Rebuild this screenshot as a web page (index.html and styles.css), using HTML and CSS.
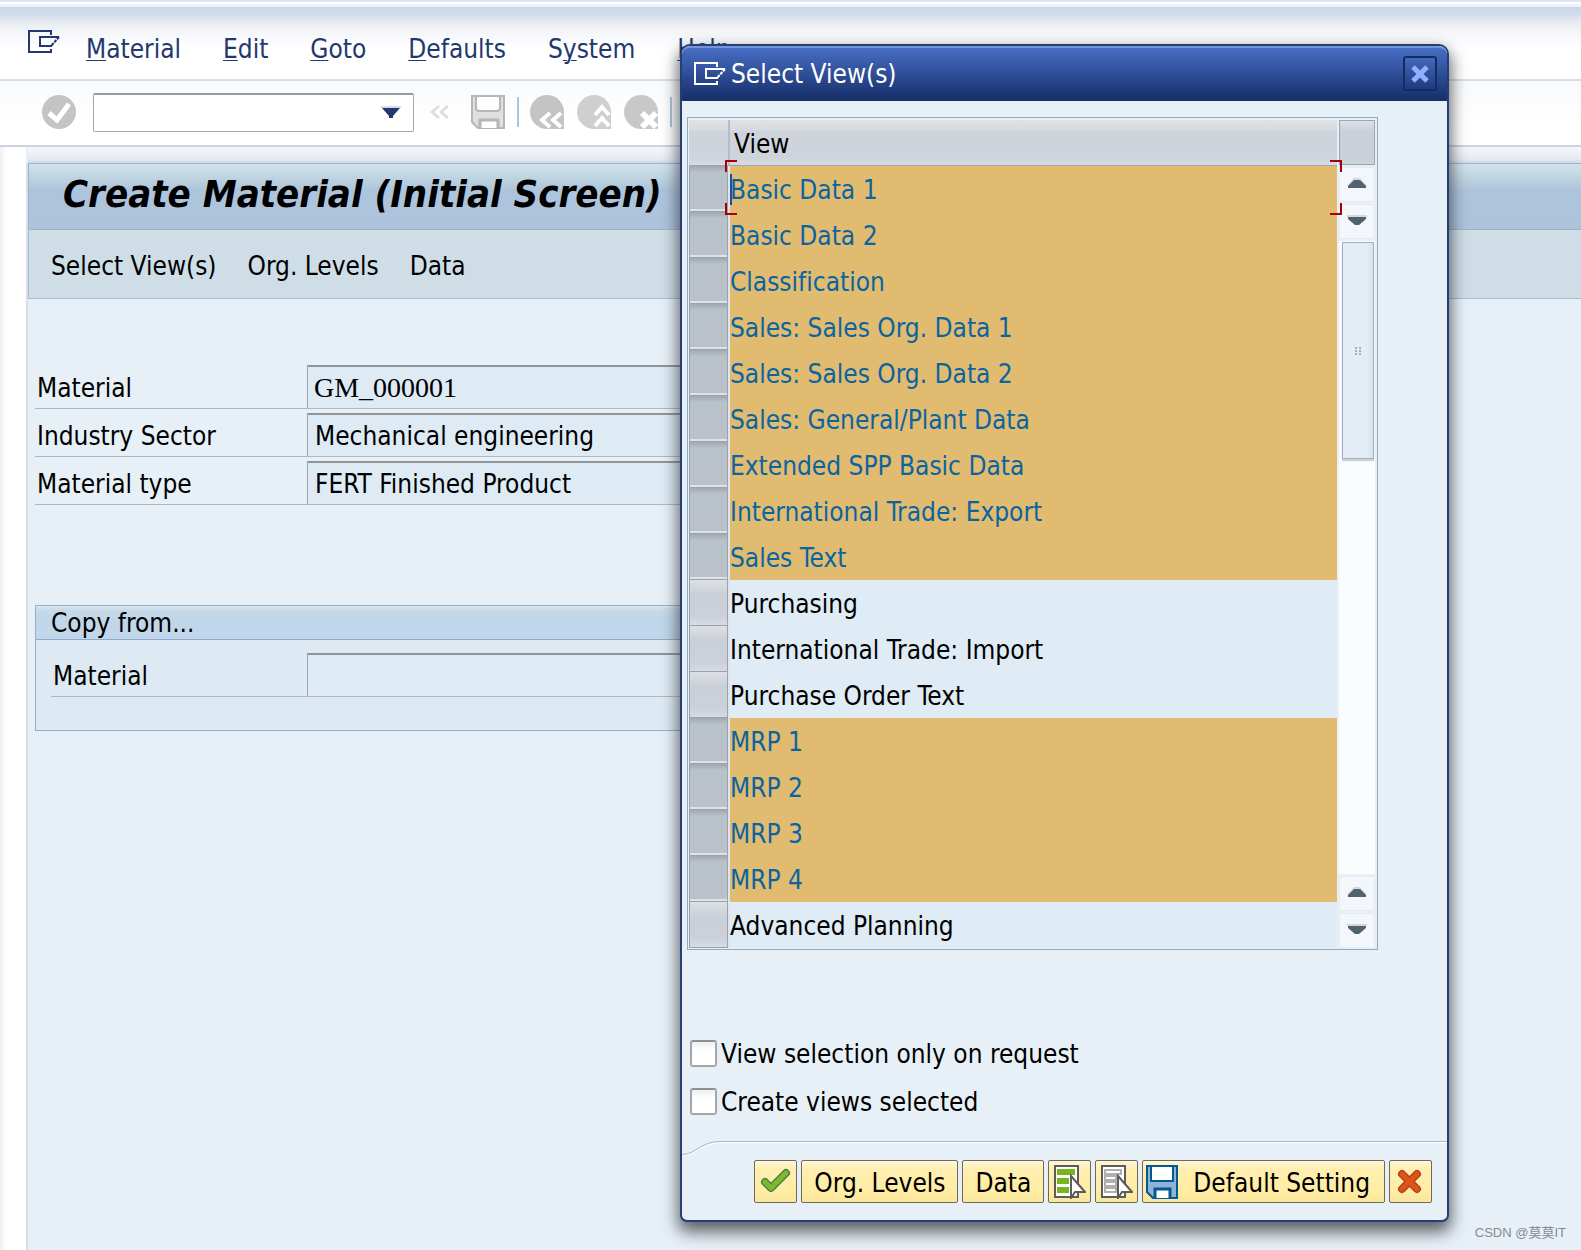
FILE: index.html
```html
<!DOCTYPE html>
<html lang="en">
<head>
<meta charset="utf-8">
<title>Create Material (Initial Screen)</title>
<link rel="stylesheet" href="styles.css">
</head>
<body>
<div class="window">
  <header class="menubar">
    <button class="menu-icon" aria-label="System menu">
      <svg width="33" height="24" viewBox="0 0 33 24" fill="none" stroke="currentColor" stroke-width="2"><path d="M23 5V1H1V22H23V19"/><path d="M12 7H31M12 6V17M12 16H24"/><path d="M31 7L23 16" stroke-dasharray="3 1"/></svg>
    </button>
    <nav class="menus">
      <a href="#"><u>M</u>aterial</a>
      <a href="#"><u>E</u>dit</a>
      <a href="#"><u>G</u>oto</a>
      <a href="#"><u>D</u>efaults</a>
      <a href="#">S<u>y</u>stem</a>
      <a href="#"><u>H</u>elp</a>
    </nav>
  </header>

  <div class="toolbar">
    <button class="tool" aria-label="Enter">
      <svg width="34" height="34" viewBox="0 0 34 34"><circle cx="17" cy="17" r="17" fill="#c4c4c4"/><path d="M7 18L15 25L27 9" fill="none" stroke="#fff" stroke-width="5"/></svg>
    </button>
    <div class="command">
      <input type="text" aria-label="Command">
      <button aria-label="Command history">
        <svg width="20" height="13" viewBox="0 0 20 13"><path d="M0 0H20V2H0Z" fill="#d8dbe4"/><path d="M1 2H19L12 10V12H8V10Z" fill="#22386f"/></svg>
      </button>
    </div>
    <button class="tool collapse" aria-label="Collapse">
      <svg width="20" height="14" viewBox="0 0 20 14" fill="none" stroke="#dcdcdc" stroke-width="2.500"><path d="M9 1L2 7L9 13M18 1L11 7L18 13"/></svg>
    </button>
    <button class="tool" aria-label="Save">
      <svg width="34" height="34" viewBox="0 0 34 34"><path d="M1 1H33V33H7L1 27Z" fill="#e0e0e0" stroke="#b6b6b6" stroke-width="2"/><path d="M5 1H29V13Q29 16 26 16H8Q5 16 5 13Z" fill="#fff" stroke="#b6b6b6" stroke-width="2"/><path d="M9 33V25H27V33" fill="#fff" stroke="#b6b6b6" stroke-width="3"/></svg>
    </button>
    <span class="divider"></span>
    <div class="nav-tools">
      <button class="tool" aria-label="Back">
        <svg width="34" height="34" viewBox="0 0 34 34"><circle cx="17" cy="17" r="17" fill="#c4c4c4"/><path d="M34 20V34H18Z" fill="#c4c4c4"/><path d="M20 18L12 25L20 32M31 18L23 25L31 32" fill="none" stroke="#fff" stroke-width="4"/></svg>
      </button>
      <button class="tool" aria-label="Exit">
        <svg width="34" height="34" viewBox="0 0 34 34"><circle cx="17" cy="17" r="17" fill="#cfcfcf"/><path d="M34 18V34H18Z" fill="#cfcfcf"/><path d="M18 20L25 12L32 20M18 31L25 23L32 31" fill="none" stroke="#fff" stroke-width="4"/></svg>
      </button>
      <button class="tool" aria-label="Cancel">
        <svg width="34" height="34" viewBox="0 0 34 34"><circle cx="17" cy="17" r="17" fill="#c8c8c8"/><path d="M34 18V34H18Z" fill="#c8c8c8"/><path d="M18 18L32 32M32 18L18 32" fill="none" stroke="#fff" stroke-width="6"/></svg>
      </button>
    </div>
    <span class="divider"></span>
  </div>

  <main class="workspace">
    <div class="page">
      <h1 class="page-title">Create Material (Initial Screen)</h1>
      <div class="page-actions">
        <button>Select View(s)</button>
        <button>Org. Levels</button>
        <button>Data</button>
      </div>
      <form class="form">
        <div class="field">
          <label for="material">Material</label>
          <input id="material" class="typed" type="text" value="GM_000001">
        </div>
        <div class="field">
          <label for="sector">Industry Sector</label>
          <input id="sector" type="text" value="Mechanical engineering">
        </div>
        <div class="field">
          <label for="type">Material type</label>
          <input id="type" type="text" value="FERT Finished Product">
        </div>
        <section class="group">
          <h2>Copy from...</h2>
          <div class="field">
            <label for="copy-material">Material</label>
            <input id="copy-material" type="text">
          </div>
        </section>
      </form>
    </div>
  </main>
</div>

<div class="dialog" role="dialog" aria-labelledby="dialog-title">
  <div class="dialog-head">
    <svg width="33" height="24" viewBox="0 0 33 24" fill="none" stroke="#fff" stroke-width="2"><path d="M23 5V1H1V22H23V19"/><path d="M12 7H31M12 6V17M12 16H24"/><path d="M31 7L23 16" stroke-dasharray="3 1"/></svg>
    <h2 id="dialog-title">Select View(s)</h2>
    <button class="close" aria-label="Close">
      <svg width="18" height="18" viewBox="0 0 18 18"><path d="M2 2L16 16M16 2L2 16" stroke="#8eb0ff" stroke-width="5"/></svg>
    </button>
  </div>

  <div class="grid">
    <table>
      <thead><tr><th class="pick" aria-label="Select"></th><th class="name">View</th></tr></thead>
      <tbody>
        <tr class="on current"><td class="pick"><button aria-label="Row 1"></button></td><td><i class="mark tl"></i><i class="mark tr"></i><i class="mark bl"></i><i class="mark br"></i><i class="caret"></i>Basic Data 1</td></tr>
        <tr class="on"><td class="pick"><button aria-label="Row 2"></button></td><td>Basic Data 2</td></tr>
        <tr class="on"><td class="pick"><button aria-label="Row 3"></button></td><td>Classification</td></tr>
        <tr class="on"><td class="pick"><button aria-label="Row 4"></button></td><td>Sales: Sales Org. Data 1</td></tr>
        <tr class="on"><td class="pick"><button aria-label="Row 5"></button></td><td>Sales: Sales Org. Data 2</td></tr>
        <tr class="on"><td class="pick"><button aria-label="Row 6"></button></td><td>Sales: General/Plant Data</td></tr>
        <tr class="on"><td class="pick"><button aria-label="Row 7"></button></td><td>Extended SPP Basic Data</td></tr>
        <tr class="on"><td class="pick"><button aria-label="Row 8"></button></td><td>International Trade: Export</td></tr>
        <tr class="on"><td class="pick"><button aria-label="Row 9"></button></td><td>Sales Text</td></tr>
        <tr><td class="pick"><button aria-label="Row 10"></button></td><td>Purchasing</td></tr>
        <tr><td class="pick"><button aria-label="Row 11"></button></td><td>International Trade: Import</td></tr>
        <tr><td class="pick"><button aria-label="Row 12"></button></td><td>Purchase Order Text</td></tr>
        <tr class="on"><td class="pick"><button aria-label="Row 13"></button></td><td>MRP 1</td></tr>
        <tr class="on"><td class="pick"><button aria-label="Row 14"></button></td><td>MRP 2</td></tr>
        <tr class="on"><td class="pick"><button aria-label="Row 15"></button></td><td>MRP 3</td></tr>
        <tr class="on"><td class="pick"><button aria-label="Row 16"></button></td><td>MRP 4</td></tr>
        <tr><td class="pick"><button aria-label="Row 17"></button></td><td>Advanced Planning</td></tr>
      </tbody>
    </table>
    <div class="side">
      <button class="corner" aria-label="Configure columns"></button>
      <button class="step" aria-label="First"><svg width="20" height="10" viewBox="0 0 20 10"><path d="M0 8L7 0H13L20 8Z" fill="#d3d8dd"/><path d="M1 10V8L7 2H13L19 8V10Z" fill="#51626f"/></svg></button>
      <button class="step" aria-label="Previous"><svg width="20" height="10" viewBox="0 0 20 10"><path d="M0 0H20V2H0Z" fill="#d3d8dd"/><path d="M1 2H19V4L12 10H8L1 4Z" fill="#51626f"/></svg></button>
      <div class="track"><div class="thumb"><svg width="6" height="8" viewBox="0 0 6 8" fill="#9fb0c0"><path d="M0 0H2V2H0ZM4 0H6V2H4ZM0 3H2V5H0ZM4 3H6V5H4ZM0 6H2V8H0ZM4 6H6V8H4Z"/></svg></div></div>
      <button class="step" aria-label="Next"><svg width="20" height="10" viewBox="0 0 20 10"><path d="M0 8L7 0H13L20 8Z" fill="#d3d8dd"/><path d="M1 10V8L7 2H13L19 8V10Z" fill="#51626f"/></svg></button>
      <button class="step" aria-label="Last"><svg width="20" height="10" viewBox="0 0 20 10"><path d="M0 0H20V2H0Z" fill="#d3d8dd"/><path d="M1 2H19V4L12 10H8L1 4Z" fill="#51626f"/></svg></button>
    </div>
  </div>

  <div class="options">
    <label><input type="checkbox"><span>View selection only on request</span></label>
    <label><input type="checkbox"><span>Create views selected</span></label>
  </div>

  <footer class="dialog-foot">
    <div class="edge">
      <svg width="38" height="16" viewBox="0 0 38 16" fill="none"><path d="M0 14.500C14 14.500 20 2.500 38 1.500" stroke="#fff"/><path d="M0 13.500C14 13.500 18 .5 38 .5" stroke="#a9b6cc"/></svg>
      <span></span>
    </div>
    <div class="buttons">
      <button class="square" aria-label="Continue">
        <svg width="34" height="30" viewBox="0 0 34 30" fill="none" stroke-linejoin="round" stroke-linecap="round"><path d="M6 15L12 21L27 6" stroke="#4b8050" stroke-width="8"/><path d="M6 15L12 21L27 6" stroke="#7db928" stroke-width="5"/></svg>
      </button>
      <button class="wide">Org. Levels</button>
      <button class="wide">Data</button>
      <button class="square" aria-label="Select all">
        <svg width="33" height="35" viewBox="0 0 33 35"><path d="M2 2H25V33H2Z" fill="#fff" stroke="#5c5c5c" stroke-width="2"/><path d="M4 5H22V11H4ZM4 14H16V20H4ZM4 23H16V29H4Z" fill="#78b51c"/><path d="M18 12V34L22 28H32Z" fill="#fff" stroke="#5c5c5c" stroke-width="2"/></svg>
      </button>
      <button class="square" aria-label="Deselect all">
        <svg width="33" height="35" viewBox="0 0 33 35"><path d="M2 2H25V33H2Z" fill="#fff" stroke="#5c5c5c" stroke-width="2"/><path d="M5 6H21V10H5ZM5 12H16V16H5ZM5 18H16V22H5ZM5 24H16V28H5Z" fill="#fff" stroke="#b0b0b0" stroke-width="2"/><path d="M18 12V34L22 28H32Z" fill="#fff" stroke="#5c5c5c" stroke-width="2"/></svg>
      </button>
      <button class="save">
        <svg width="32" height="34" viewBox="0 0 32 34"><path d="M1 1H31V33H7L1 27Z" fill="#8fb2d9" stroke="#045a90" stroke-width="2"/><path d="M5 1H27V16H5Z" fill="#fff" stroke="#045a90" stroke-width="2"/><path d="M9 33V24H24V33" fill="#fff" stroke="#045a90" stroke-width="3"/></svg>
        <span>Default Setting</span>
      </button>
      <button class="square" aria-label="Cancel">
        <svg width="30" height="28" viewBox="0 0 30 28" stroke-linecap="round"><path d="M6 6L21 21M21 6L6 21" stroke="#b3402a" stroke-width="8"/><path d="M6 6L21 21M21 6L6 21" stroke="#de5613" stroke-width="5"/></svg>
      </button>
    </div>
  </footer>
</div>

<p class="credit">CSDN @莫莫IT</p>
</body>
</html>
```
FILE: styles.css
```css
* { box-sizing: border-box; }

body {
  margin: 0;
  position: relative;
  min-height: 100vh;
  overflow-x: hidden;
  background: #e8f0f7;
  color: #000;
  font: 26px/32px "DejaVu Sans Condensed", "Noto Sans", sans-serif;
  font-variant-ligatures: none;
}

h1, h2, p { margin: 0; }

h1, h2 {
  font-size: 26px;
  font-weight: normal;
}

button, input {
  margin: 0;
  padding: 0;
  border: 0;
  border-radius: 0;
  background: none;
  color: inherit;
  font: inherit;
}

svg { display: block; }

.window {
  display: flex;
  flex-direction: column;
  min-height: 100vh;
}

/* Menu bar */
.menubar {
  display: flex;
  align-items: center;
  gap: 25px;
  height: 81px;
  padding: 16px 28px 0;
  border-top: 2px solid #dbe5f2;
  border-bottom: 2px solid #d9dee6;
  background: linear-gradient(#fff 0 2px, #edf2f8 2px 5px, #c9d7e8 5px, #d0dbea 12px, #e8ebf1 20px, #f5f7fb 32px, #fff 46px);
}

.menu-icon {
  align-self: flex-start;
  padding-top: 12px;
  color: #22386f;
}

.menus {
  display: flex;
  gap: 42px;
}

.menus a {
  color: #22386f;
  text-decoration: none;
}

.menus u {
  text-decoration-thickness: 1px;
  text-underline-offset: 2px;
}

/* Standard toolbar */
.toolbar {
  display: flex;
  align-items: center;
  height: 66px;
  padding: 0 28px 2px 42px;
  border-bottom: 2px solid #cdd2de;
  background: linear-gradient(#f9fafd, #fff 40px);
}

.command {
  display: flex;
  align-items: center;
  width: 321px;
  height: 39px;
  margin-left: 17px;
  padding: 0 12px 0 8px;
  border: 1px solid #a5a8ae;
  border-top: 2px solid #96999f;
  border-radius: 2px;
  background: #fff;
}

.command input {
  flex: 1;
  min-width: 0;
}

.collapse { margin: 0 21px 0 16px; }

.divider {
  width: 2px;
  height: 30px;
  margin: 0 11px 0 12px;
  background: #a9c6e0;
}

.nav-tools {
  display: flex;
  gap: 13px;
}

/* Work area */
.workspace {
  flex: 1;
  display: flex;
  padding: 16px 0 0 26px;
  background:
    linear-gradient(#f5f7fa, #e6ebf2 12px, #d3d9e3 16px) right 0 top 0 / calc(100% - 28px) 16px no-repeat,
    linear-gradient(90deg, #eef0f3, #fff 6px, #fff) left top / 26px 100% no-repeat;
}

.page {
  flex: 1;
  border-left: 2px solid #d9dfea;
  background: #e8f0f7;
}

.page-title {
  height: 67px;
  padding-left: 34px;
  border: 1px solid #9db4c8;
  border-right: 0;
  background: linear-gradient(#d2e2ee, #b9cfdd 18px, #adc5dc 26px, #adc3db);
  font-size: 38px;
  font-style: italic;
  font-weight: bold;
  line-height: 60px;
}

.page-actions {
  display: flex;
  align-items: center;
  gap: 31px;
  height: 69px;
  padding: 4px 22px 0;
  border-left: 1px solid #a9bdd0;
  border-bottom: 1px solid #a9bdd0;
  background: #cfdde7;
}

.form {
  display: flex;
  flex-direction: column;
  gap: 4px;
  max-width: 1080px;
  padding: 66px 0 0 7px;
}

.field {
  display: flex;
  align-items: center;
  height: 44px;
  border-bottom: 1px solid #b4b7ba;
}

.field label {
  width: 272px;
  padding: 2px 0 0 2px;
}

.field input {
  flex: 1;
  min-width: 0;
  height: 43px;
  padding: 0 7px;
  border: 1px solid #a2a6aa;
  border-top: 2px solid #919598;
  border-bottom: 0;
  background: #deeaf4;
}

.field .typed {
  padding: 0 6px;
  font-family: "Liberation Serif", serif;
  font-size: 28px;
}

.group {
  height: 126px;
  margin-top: 96px;
  border: 1px solid #93b1d0;
  background: #deeaf3;
}

.group h2 {
  height: 34px;
  padding: 1px 0 0 15px;
  border-bottom: 1px solid #8eabcc;
  background: linear-gradient(#dbe7f1, #c9dae9 4px, #c0d6e9 14px, #c1d6ea);
}

.group .field { margin: 13px 0 0 15px; }
.group .field label { width: 256px; }

/* Dialog window */
.dialog {
  position: absolute;
  left: 680px;
  top: 44px;
  width: 769px;
  border: 2px solid #263e78;
  border-radius: 10px 10px 7px 7px;
  background: #e8f0f7;
  box-shadow: 0 8px 16px 2px rgba(45, 50, 55, .75);
}

.dialog-head {
  display: flex;
  align-items: center;
  gap: 4px;
  height: 55px;
  padding: 0 10px 0 12px;
  border-top: 2px solid #7396d8;
  border-bottom: 2px solid #1e3268;
  border-radius: 8px 8px 0 0;
  background: linear-gradient(#476dc4, #17306c);
  color: #fff;
}

.dialog-head h2 { flex: 1; }

.close {
  display: grid;
  place-items: center;
  width: 34px;
  height: 35px;
  border: 2px solid #142c66;
  border-radius: 3px;
  background: linear-gradient(#4468b8, #1f3a80);
}

/* View list */
.grid {
  display: flex;
  gap: 2px;
  margin: 16px 69px 0 5px;
  padding: 2px 2px 1px 1px;
  border: 1px solid #8faac0;
}

.grid table {
  flex: 1;
  border-spacing: 0;
  table-layout: fixed;
  background: #dfebf5;
}

.grid th, .grid td {
  height: 46px;
  padding: 2px 0 0;
  text-align: left;
  font-weight: normal;
}

.grid th {
  border-bottom: 1px solid #9aa8b5;
  background: linear-gradient(#dfe3e6, #d6dadf 10px, #cfd4dc 12px, #cfd3dc 38px, #d9dcdf);
}

.grid .name { padding-left: 4px; }

.grid .pick {
  width: 41px;
  padding: 0;
  border-right: 2px solid #dfe5ec;
}

.grid th.pick { border-right-color: #b4bdc8; }

.pick button {
  display: block;
  width: 39px;
  height: 46px;
  border: 1px solid #98a3ae;
  border-top: 0;
  background: linear-gradient(#dde0e6, #cbd0d8 14px, #cbd0d9 36px, #d8dbe0);
}

.on td { background: #e1bb70; color: #0a64a0; }
.on .pick { background: #e8f0f7; }

.on .pick button {
  box-shadow: inset 0 -2px #dfe3e8;
  background: linear-gradient(#9fa9b3, #b9c1c9 6px, #bac1c9);
}

.current td { position: relative; }

.mark {
  position: absolute;
  width: 12px;
  height: 12px;
  border: 0 solid #a80008;
}

.tl { left: -5px; top: -6px; border-width: 2px 0 0 2px; }
.tr { right: -5px; top: -6px; border-width: 2px 2px 0 0; }
.bl { left: -5px; bottom: -3px; border-width: 0 0 2px 2px; }
.br { right: -5px; bottom: -3px; border-width: 0 2px 2px 0; }

.caret {
  position: absolute;
  left: 0;
  top: 8px;
  width: 2px;
  height: 31px;
  background: #1f4f9c;
}

/* Scroll column */
.side {
  display: flex;
  flex-direction: column;
  gap: 2px;
  width: 36px;
  background: #ebf0f6;
}

.corner {
  height: 45px;
  border: 1px solid #98a5b2;
  background: linear-gradient(#dde2e6, #c9d0d8 10px, #c9d0d8 38px, #cfd6da);
}

.step {
  display: grid;
  place-items: center;
  height: 35px;
  padding-bottom: 4px;
  border: 1px solid #e6ebf2;
  background: #f3f7fb;
}

.track {
  flex: 1;
  padding: 1px 1px 0 3px;
  background: #fbfcfd;
}

.thumb {
  display: grid;
  place-items: center;
  height: 217px;
  border: 1px solid #9fb2c5;
  background: linear-gradient(90deg, #e4edf6 80%, #d5e1ec);
  box-shadow: 0 2px 1px #ccd3d8;
}

/* Options */
.options { margin: 79px 0 0 8px; }

.options label {
  display: flex;
  align-items: center;
  gap: 4px;
  height: 48px;
}

.options span { padding-top: 2px; }

.options input {
  appearance: none;
  width: 27px;
  height: 27px;
  border: 2px solid #a3a7ab;
  border-top-color: #8f9294;
  border-radius: 3px;
  background: linear-gradient(#eceef0, #fff 8px);
}

/* Footer */
.dialog-foot { margin-top: 16px; }

.edge { display: flex; }

.edge span {
  flex: 1;
  border-top: 1px solid #a9b6cc;
  box-shadow: inset 0 1px #fff;
}

.buttons {
  display: flex;
  justify-content: flex-end;
  gap: 4px;
  padding: 3px 15px 17px;
}

.buttons button {
  display: flex;
  align-items: center;
  justify-content: center;
  height: 43px;
  border: 1px solid #6d6a5c;
  border-radius: 2px;
  background: linear-gradient(#fff7dc, #ffeeb0 8px, #ffeda3 30px, #fbe69a);
}

.buttons .square { width: 43px; }
.buttons .wide { padding: 2px 12px 0; }
.buttons .save { gap: 15px; padding: 0 14px 0 3px; }
.save span { padding-top: 2px; }

.credit {
  position: absolute;
  right: 15px;
  bottom: 7px;
  color: #858a90;
  font: 13px/20px "Liberation Sans", "Noto Sans CJK SC", sans-serif;
}
```
